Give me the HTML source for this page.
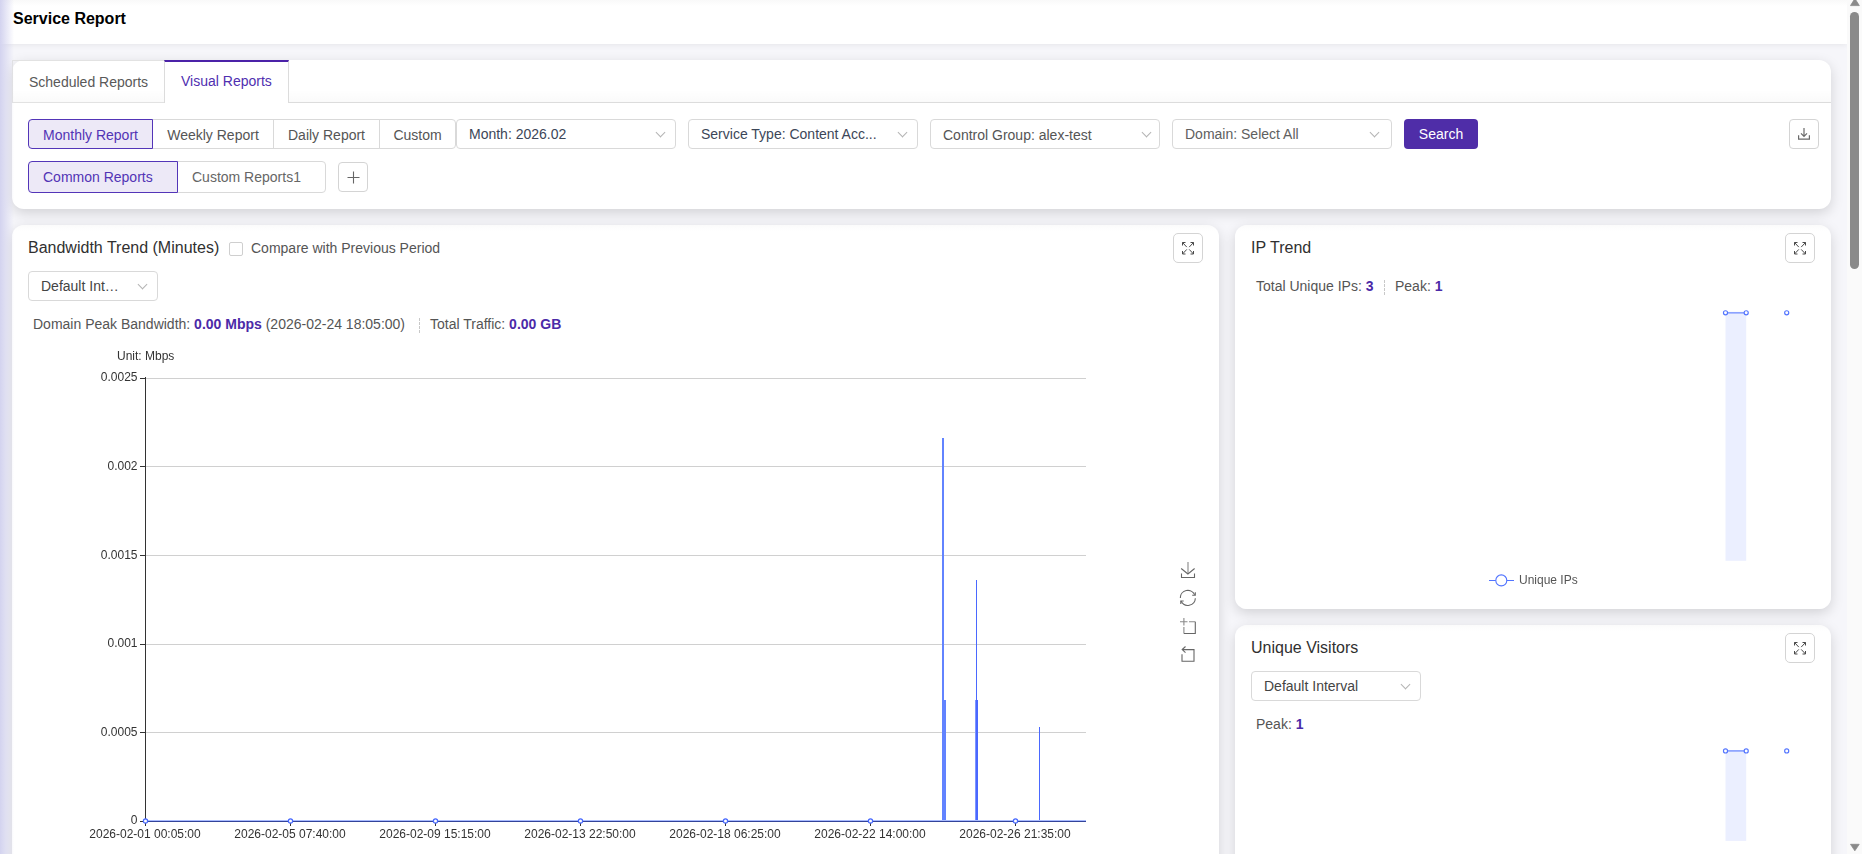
<!DOCTYPE html>
<html><head><meta charset="utf-8">
<style>
*{box-sizing:border-box;margin:0;padding:0}
html,body{width:1862px;height:854px;overflow:hidden}
body{font-family:"Liberation Sans",sans-serif;background:#f6f6fa;position:relative;color:#333}
.abs{position:absolute}
#lgrad{position:absolute;left:0;top:0;width:14px;height:854px;background:linear-gradient(to right,#d3d3ef,rgba(240,240,250,0));z-index:50}
#header{position:absolute;left:0;top:0;width:1847px;height:44px;background:linear-gradient(#f9f9f9,#fff 6px);box-shadow:0 1px 6px rgba(0,0,0,0.07);z-index:2}
#title{position:absolute;left:13px;top:10px;font-size:16px;font-weight:bold;color:#000;line-height:18px}
#sb{position:absolute;left:1847px;top:0;width:15px;height:854px;background:#fafafa;z-index:60}
#thumb{position:absolute;left:3px;top:12px;width:9px;height:256.5px;background:#8a8a8a;border-radius:4.5px}
.card{position:absolute;background:#fff;border-radius:12px;box-shadow:0 4px 13px rgba(0,0,0,0.15)}
.card2{background:linear-gradient(#fbfbfb,#fff 6px)}
.t14{font-size:14px;line-height:16px;white-space:nowrap}
.seg{position:absolute;top:119px;height:30px;border:1px solid #d9d9d9;background:#fff;color:#555;font-size:14px;line-height:30px;text-align:center}
.sel{position:absolute;height:30px;border:1px solid #d9d9d9;border-radius:4px;background:#fff;color:#3c4658;font-size:14px;line-height:29px;padding-left:12px;white-space:nowrap}
.chev{position:absolute;margin-top:1px;width:7px;height:7px;border-right:1px solid #b4b4b4;border-bottom:1px solid #b4b4b4;transform:rotate(45deg)}
.purple{color:#4b2aa8;font-weight:bold}
</style></head>
<body>
<div id="lgrad"></div>
<div id="header"><div id="title">Service Report</div></div>
<div id="sb"><div id="thumb"></div>
<svg width="15" height="854" style="position:absolute;left:0;top:0"><path d="M3.5 5.6L7.9 -1.5L12.3 5.6Z" fill="#8a8a8a" stroke="#8a8a8a" stroke-width="0.8" stroke-linejoin="round"/><path d="M3.5 844.3L12.2 844.3L7.85 850.8Z" fill="#8a8a8a" stroke="#8a8a8a" stroke-width="0.8" stroke-linejoin="round"/></svg></div>

<!-- card 1 -->
<div class="card" style="left:12px;top:60px;width:1819px;height:149px;">
  <div class="abs" style="left:0;top:0;width:1819px;height:43px;border-bottom:1px solid #dcdcdc;border-top-right-radius:12px;background:linear-gradient(rgba(255,255,255,0) 70%,rgba(0,0,0,0.02))"></div>
  <div class="abs" style="left:0;top:0;width:153px;height:43px;border:1px solid #e2e2e2;border-right:none;border-radius:1px 0 0 0"></div>
  <div class="abs t14" style="left:17px;top:14px;color:#595959;line-height:16px">Scheduled Reports</div>
  <div class="abs" style="left:152px;top:0;width:125px;height:43px;border-left:1px solid #dcdcdc;border-right:1px solid #dcdcdc;border-top:2px solid #4b22a8;background:#fff"></div>
  <div class="abs t14" style="left:169px;top:13px;color:#4f2fb0;line-height:16px">Visual Reports</div>
  <div class="seg" style="left:140px;width:122px;top:59px">Weekly Report</div>
  <div class="seg" style="left:261px;width:107px;top:59px">Daily Report</div>
  <div class="seg" style="left:367px;width:77px;top:59px;border-radius:0 4px 4px 0">Custom</div>
  <div class="seg" style="left:16px;width:125px;top:59px;border-color:#5335b8;background:#ede9f7;color:#5234b5;border-radius:4px 0 0 4px">Monthly Report</div>
  <div class="sel" style="left:444px;top:59px;width:220px;color:#3c4658">Month: 2026.02<div class="chev" style="left:200px;top:8px"></div></div>
  <div class="sel" style="left:676px;top:59px;width:230px;color:#3c4658">Service Type: Content Acc...<div class="chev" style="left:210px;top:8px"></div></div>
  <div class="sel" style="left:918px;top:59px;width:230px;color:#555;line-height:31px">Control Group: alex-test<div class="chev" style="left:212px;top:8px"></div></div>
  <div class="sel" style="left:1160px;top:59px;width:220px;color:#606060">Domain: Select All<div class="chev" style="left:198px;top:8px"></div></div>
  <div class="abs" style="left:1392px;top:59px;width:74px;height:30px;background:#4f2da8;border-radius:4px;color:#fff;font-size:14px;line-height:30px;text-align:center">Search</div>
  <div class="abs" style="left:1777px;top:59px;width:30px;height:30px;border:1px solid #d4d4d4;border-radius:4px;background:#fff">
    <svg width="28" height="28" style="position:absolute;left:0;top:0" viewBox="0 0 28 28"><path d="M14 8v8.3M11 13.3l3 3 3-3M8.6 15.2v3.9h10.8v-3.9" fill="none" stroke="#6a6a6a" stroke-width="1.2"/></svg>
  </div>
  <div class="seg" style="left:165px;width:149px;top:101px;height:32px;line-height:31px;color:#666;border-radius:0 4px 4px 0;text-align:left;padding-left:14px">Custom Reports1</div>
  <div class="seg" style="left:16px;width:150px;top:101px;height:32px;line-height:31px;border-color:#5335b8;background:#ede9f7;color:#5234b5;border-radius:4px 0 0 4px;text-align:left;padding-left:14px">Common Reports</div>
  <div class="abs" style="left:326px;top:102px;width:30px;height:30px;border:1px solid #d4d4d4;border-radius:4px;background:#fff">
    <svg width="28" height="28" style="position:absolute;left:0;top:0" viewBox="0 0 28 28"><path d="M14.5 8.5v12M8.5 14.5h12" fill="none" stroke="#666" stroke-width="1.1"/></svg>
  </div>
</div>

<!-- card 2 bandwidth -->
<div class="card card2" style="left:12px;top:225px;width:1207px;height:700px;"></div>
<div class="abs" style="left:28px;top:239px;font-size:16px;line-height:18px;color:#303030;white-space:nowrap;z-index:6">Bandwidth Trend (Minutes)</div>
<div class="abs" style="left:229px;top:242px;width:14px;height:14px;border:1px solid #cfcfcf;border-radius:2px;background:#fff;z-index:6"></div>
<div class="abs t14" style="left:251px;top:240px;color:#555;z-index:6">Compare with Previous Period</div>
<div class="abs" style="left:1173px;top:233px;width:30px;height:30px;border:1px solid #d4d4d4;border-radius:5px;background:#fff;z-index:6">
  <svg width="28" height="28" viewBox="0 0 28 28" style="position:absolute;left:0;top:0"><path d="M8.5 11.5V8.5h3M8.5 8.5l4.3 4.6M19.5 11.5V8.5h-3M19.5 8.5l-4.3 4.6M8.5 17V20h3M8.5 20l4.3-4.6M19.5 17V20h-3M19.5 20l-4.3-4.6" fill="none" stroke="#4a4a4a" stroke-width="1"/></svg>
</div>
<div class="sel" style="left:28px;top:271px;width:130px;color:#444;z-index:6">Default Int…<div class="chev" style="left:110px;top:8px"></div></div>
<div class="abs t14" style="left:33px;top:316px;color:#555;z-index:6">Domain Peak Bandwidth: <span class="purple">0.00 Mbps</span> (2026-02-24 18:05:00)</div>
<div class="abs" style="left:419px;top:318px;height:15px;border-left:1px dashed #c8c8c8;z-index:6"></div>
<div class="abs t14" style="left:430px;top:316px;color:#555;z-index:6">Total Traffic: <span class="purple">0.00 GB</span></div>
<svg class="abs" style="left:80px;top:340px;z-index:5;will-change:transform" width="1130" height="514" viewBox="80 340 1130 514">
<g font-family="Liberation Sans" font-size="12" fill="#333">
<text x="145.7" y="360" text-anchor="middle">Unit: Mbps</text>
<text x="137.5" y="381" text-anchor="end">0.0025</text>
<text x="137.5" y="470" text-anchor="end">0.002</text>
<text x="137.5" y="559" text-anchor="end">0.0015</text>
<text x="137.5" y="647" text-anchor="end">0.001</text>
<text x="137.5" y="736" text-anchor="end">0.0005</text>
<text x="137.5" y="824" text-anchor="end">0</text>
<text x="145" y="838" text-anchor="middle">2026-02-01 00:05:00</text>
<text x="290" y="838" text-anchor="middle">2026-02-05 07:40:00</text>
<text x="435" y="838" text-anchor="middle">2026-02-09 15:15:00</text>
<text x="580" y="838" text-anchor="middle">2026-02-13 22:50:00</text>
<text x="725" y="838" text-anchor="middle">2026-02-18 06:25:00</text>
<text x="870" y="838" text-anchor="middle">2026-02-22 14:00:00</text>
<text x="1015" y="838" text-anchor="middle">2026-02-26 21:35:00</text>
</g>
<g shape-rendering="crispEdges">
<rect x="146" y="378" width="940" height="1" fill="#d0d0d0"/>
<rect x="140" y="378" width="5" height="1" fill="#333"/>
<rect x="146" y="466" width="940" height="1" fill="#d0d0d0"/>
<rect x="140" y="466" width="5" height="1" fill="#333"/>
<rect x="146" y="555" width="940" height="1" fill="#d0d0d0"/>
<rect x="140" y="555" width="5" height="1" fill="#333"/>
<rect x="146" y="644" width="940" height="1" fill="#d0d0d0"/>
<rect x="140" y="644" width="5" height="1" fill="#333"/>
<rect x="146" y="732" width="940" height="1" fill="#d0d0d0"/>
<rect x="140" y="732" width="5" height="1" fill="#333"/>
<rect x="140" y="821" width="5" height="1" fill="#333"/>
<rect x="145" y="377" width="1" height="445" fill="#333"/>
<rect x="145" y="822" width="1" height="4" fill="#333"/>
<rect x="290" y="822" width="1" height="4" fill="#333"/>
<rect x="435" y="822" width="1" height="4" fill="#333"/>
<rect x="580" y="822" width="1" height="4" fill="#333"/>
<rect x="725" y="822" width="1" height="4" fill="#333"/>
<rect x="870" y="822" width="1" height="4" fill="#333"/>
<rect x="1015" y="822" width="1" height="4" fill="#333"/>
<rect x="145" y="820" width="941" height="1" fill="#a9bbff"/>
<rect x="145" y="821" width="941" height="1" fill="#33449a"/>
<rect x="942" y="438" width="2" height="382" fill="#6283ff"/>
<rect x="944" y="700" width="2" height="120" fill="#6283ff"/>
<rect x="976" y="580" width="1" height="240" fill="#4a68ff"/>
<rect x="975" y="700" width="1" height="120" fill="#7d95ff"/>
<rect x="977" y="700" width="1" height="120" fill="#4a68ff"/>
<rect x="1039" y="727" width="1" height="93" fill="#4a68ff"/>
</g>
<circle cx="145.5" cy="821" r="2.1" fill="#fff" stroke="#4466ff" stroke-width="1.2"/>
<circle cx="290.5" cy="821" r="2.1" fill="#fff" stroke="#4466ff" stroke-width="1.2"/>
<circle cx="435.5" cy="821" r="2.1" fill="#fff" stroke="#4466ff" stroke-width="1.2"/>
<circle cx="580.5" cy="821" r="2.1" fill="#fff" stroke="#4466ff" stroke-width="1.2"/>
<circle cx="725.5" cy="821" r="2.1" fill="#fff" stroke="#4466ff" stroke-width="1.2"/>
<circle cx="870.5" cy="821" r="2.1" fill="#fff" stroke="#4466ff" stroke-width="1.2"/>
<circle cx="1015.5" cy="821" r="2.1" fill="#fff" stroke="#4466ff" stroke-width="1.2"/>
<g fill="none" stroke="#666" stroke-width="1.1">
<path d="M1188 562v11.7" stroke="#888"/>
<path d="M1181.2 568.5l6.7 5.5 6.7-5.5M1181.5 573.5v4h13v-4"/>
<path d="M1180.35 597.9A7.5 7.5 0 0 1 1194.65 594.73M1195.35 598.3A7.5 7.5 0 0 1 1181.05 601.07"/>
<path d="M1192.2 595.3h3.1v-3.1M1183.7 601h-2.9v2.9" stroke-width="1.1"/>
<path d="M1180 621.8h7.5M1189 621.8h6.3M1183.9 618v7.5M1183.9 627v6.5" stroke="#8a8a8a"/><path d="M1195.3 621.8v11.7h-11.4"/>
<path d="M1182 649.6h12v11.7h-12v-7M1185.5 646.5l-3.3 3.1 3.3 3"/>
</g>
</svg>

<!-- card 3 IP trend -->
<div class="card card2" style="left:1235px;top:225px;width:596px;height:384px;"></div>
<div class="abs" style="left:1251px;top:239px;font-size:16px;line-height:18px;color:#303030;white-space:nowrap;z-index:6">IP Trend</div>
<div class="abs" style="left:1785px;top:233px;width:30px;height:30px;border:1px solid #d4d4d4;border-radius:5px;background:#fff;z-index:6">
  <svg width="28" height="28" viewBox="0 0 28 28" style="position:absolute;left:0;top:0"><path d="M8.5 11.5V8.5h3M8.5 8.5l4.3 4.6M19.5 11.5V8.5h-3M19.5 8.5l-4.3 4.6M8.5 17V20h3M8.5 20l4.3-4.6M19.5 17V20h-3M19.5 20l-4.3-4.6" fill="none" stroke="#4a4a4a" stroke-width="1"/></svg>
</div>
<div class="abs t14" style="left:1256px;top:278px;color:#555;z-index:6">Total Unique IPs: <span class="purple">3</span></div>
<div class="abs" style="left:1384px;top:280px;height:15px;border-left:1px dashed #c8c8c8;z-index:6"></div>
<div class="abs t14" style="left:1395px;top:278px;color:#555;z-index:6">Peak: <span class="purple">1</span></div>
<svg class="abs" style="left:1470px;top:300px;z-index:5;will-change:transform" width="340" height="554" viewBox="1470 300 340 554">
  <rect x="1725.5" y="312.8" width="20.7" height="248" fill="#ebefff"/>
  <line x1="1725.5" y1="312.8" x2="1746.2" y2="312.8" stroke="#8ba2ff" stroke-width="1.7"/>
  <circle cx="1725.5" cy="312.8" r="2.05" fill="#fff" stroke="#5274ff" stroke-width="1.15"/>
  <circle cx="1746.2" cy="312.8" r="2.05" fill="#fff" stroke="#5274ff" stroke-width="1.15"/>
  <circle cx="1786.7" cy="312.8" r="2.05" fill="#fff" stroke="#5274ff" stroke-width="1.15"/>
  <line x1="1489" y1="580.5" x2="1514" y2="580.5" stroke="#5274ff" stroke-width="1"/>
  <circle cx="1501.3" cy="580.4" r="5.5" fill="#fff" stroke="#5274ff" stroke-width="1.1"/>
  <text x="1519" y="584" font-family="Liberation Sans" font-size="12" fill="#555">Unique IPs</text>
  <rect x="1725.5" y="750.9" width="20.7" height="90" fill="#ebefff"/>
  <line x1="1725.5" y1="750.9" x2="1746.2" y2="750.9" stroke="#8ba2ff" stroke-width="1.7"/>
  <circle cx="1725.5" cy="750.9" r="2.05" fill="#fff" stroke="#5274ff" stroke-width="1.15"/>
  <circle cx="1746.2" cy="750.9" r="2.05" fill="#fff" stroke="#5274ff" stroke-width="1.15"/>
  <circle cx="1786.7" cy="750.9" r="2.05" fill="#fff" stroke="#5274ff" stroke-width="1.15"/>
</svg>

<!-- card 4 unique visitors -->
<div class="card card2" style="left:1235px;top:625px;width:596px;height:400px;"></div>
<div class="abs" style="left:1251px;top:639px;font-size:16px;line-height:18px;color:#303030;white-space:nowrap;z-index:6">Unique Visitors</div>
<div class="abs" style="left:1785px;top:633px;width:30px;height:30px;border:1px solid #d4d4d4;border-radius:5px;background:#fff;z-index:6">
  <svg width="28" height="28" viewBox="0 0 28 28" style="position:absolute;left:0;top:0"><path d="M8.5 11.5V8.5h3M8.5 8.5l4.3 4.6M19.5 11.5V8.5h-3M19.5 8.5l-4.3 4.6M8.5 17V20h3M8.5 20l4.3-4.6M19.5 17V20h-3M19.5 20l-4.3-4.6" fill="none" stroke="#4a4a4a" stroke-width="1"/></svg>
</div>
<div class="sel" style="left:1251px;top:671px;width:170px;color:#444;z-index:6">Default Interval<div class="chev" style="left:150px;top:8px"></div></div>
<div class="abs t14" style="left:1256px;top:716px;color:#555;z-index:6">Peak: <span class="purple">1</span></div>
</body></html>
